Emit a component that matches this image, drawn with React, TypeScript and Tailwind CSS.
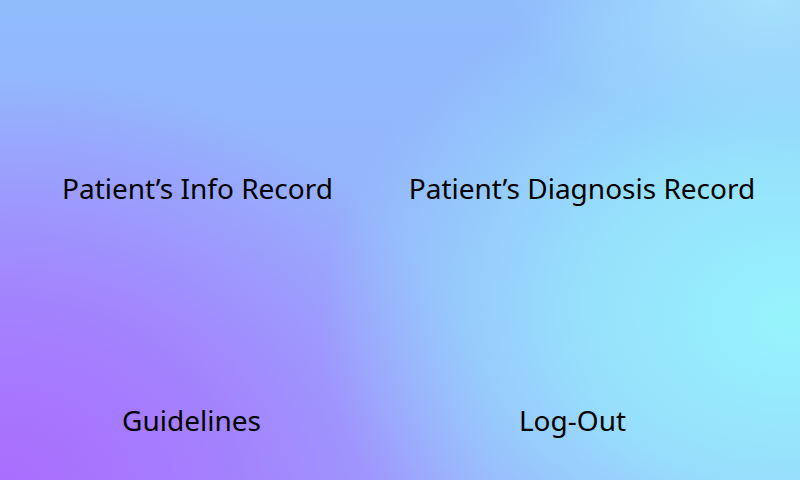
const ITEMS = [
  { label: "Patient\u2019s Info Record", shift: "pl-[3px]" },
  { label: "Patient\u2019s Diagnosis Record", shift: "pl-[8px]" },
  { label: "Guidelines", shift: "pr-[9px]" },
  { label: "Log-Out", shift: "pr-[11px]" },
]

export default function App() {
  return (
    <div
      className="relative w-[800px] h-[480px] overflow-hidden bg-[radial-gradient(ellipse_260px_130px_at_770px_0px,rgba(166,228,252,0.9)_0%,rgba(166,228,252,0)_100%),radial-gradient(ellipse_470px_360px_at_790px_320px,#96f4fc_0%,rgba(150,240,252,0.75)_45%,rgba(150,240,252,0)_100%),radial-gradient(ellipse_500px_420px_at_0px_490px,#aa6cfe_0%,rgba(168,112,254,0.7)_45%,rgba(168,112,254,0)_100%),linear-gradient(180deg,#90bcfc_0%,#96b2fc_50%,#9aa8fc_100%)]"
      style={{ fontFamily: '"Noto Sans", "Open Sans", sans-serif' }}
    >
      <div className="pt-[170px] pl-[5px]">
        <div className="grid grid-cols-[382px_382px] gap-y-[196px] text-black text-[28px] leading-[36px]">
          {ITEMS.map((item) => (
            <button key={item.label} className={`text-center cursor-pointer ${item.shift}`}>
              {item.label}
            </button>
          ))}
        </div>
      </div>
    </div>
  )
}
